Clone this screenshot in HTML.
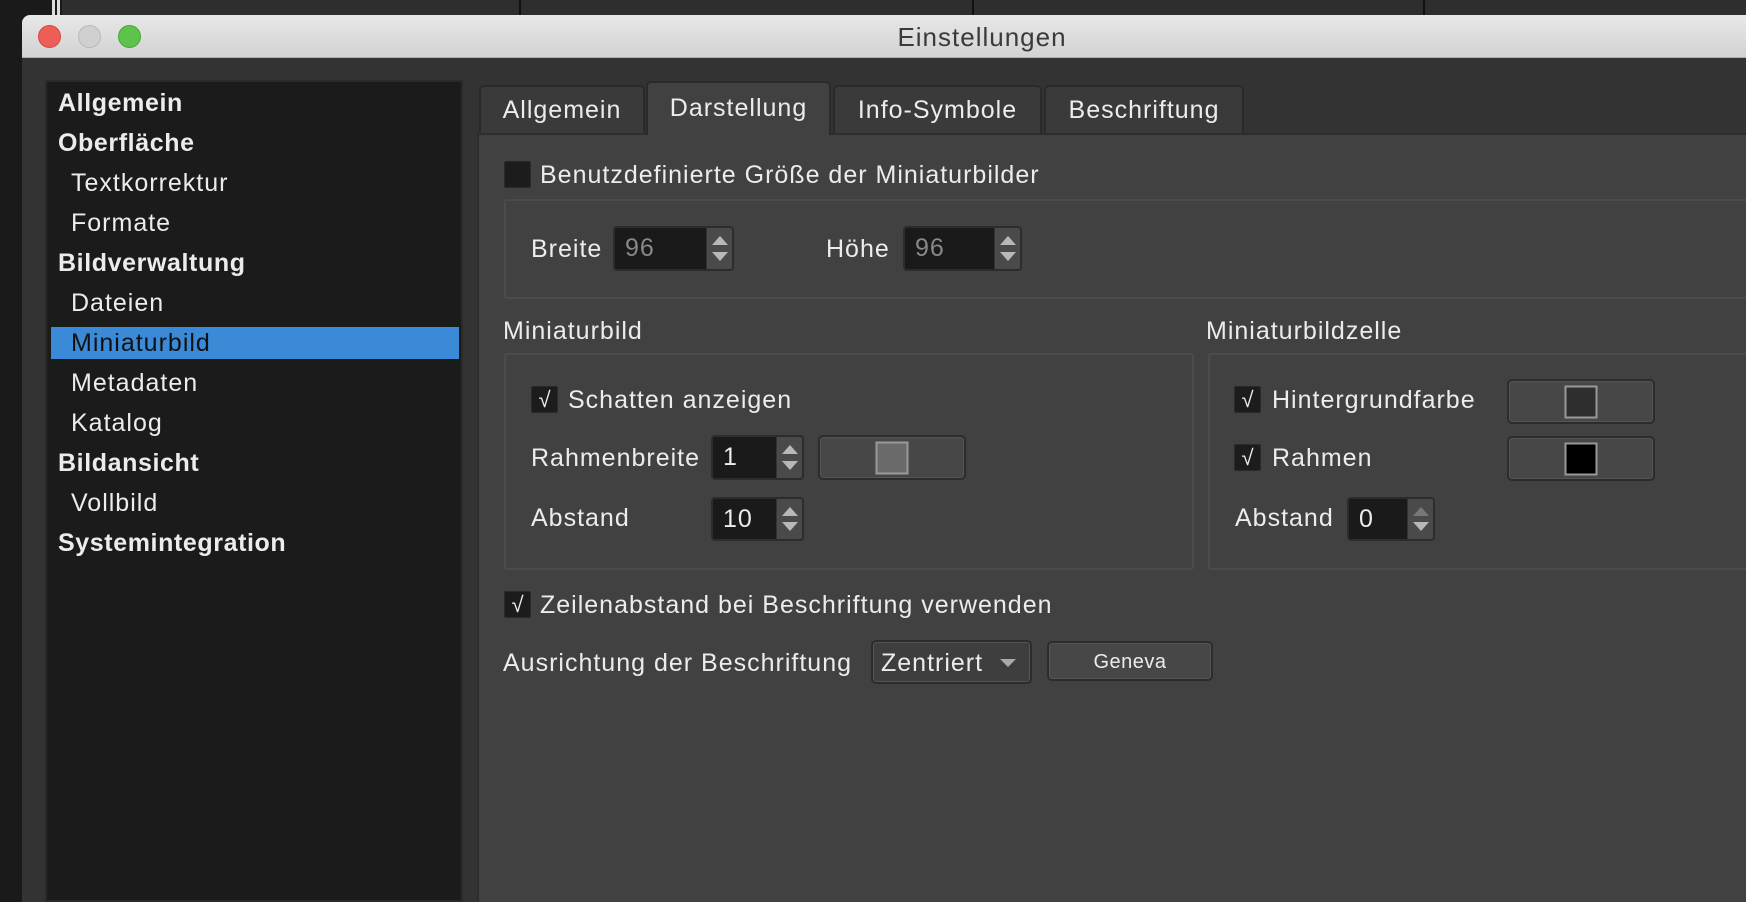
<!DOCTYPE html>
<html><head><meta charset="utf-8"><style>
*{box-sizing:border-box;margin:0;padding:0}
body{width:1746px;height:902px;overflow:hidden;background:#1a1a1a;font-family:"Liberation Sans",sans-serif;color:#ececec;position:relative}
.a{position:absolute}
.t{position:absolute;font-size:25px;letter-spacing:1px;white-space:nowrap;line-height:28px}
.cb{position:absolute;width:27px;height:27px;background:#1c1c1c;border:1px solid #2a2a2a;border-radius:2px;color:#eee;font-size:22px;line-height:26px;text-align:center}
.spin{position:absolute;background:#1a1a1a;border:2px solid #2c2c2c;border-radius:4px;overflow:hidden}
.spin .v{position:absolute;left:10px;top:0;font-size:25px;letter-spacing:1px;line-height:40px}
.spin .ar{position:absolute;right:0;top:0;bottom:0;width:26px;background:#4a4a4a;border-left:1px solid #333}
.up{position:absolute;left:5px;top:8px;width:0;height:0;border-left:8px solid transparent;border-right:8px solid transparent;border-bottom:9px solid #b8b8b8}
.dn{position:absolute;left:5px;bottom:8px;width:0;height:0;border-left:8px solid transparent;border-right:8px solid transparent;border-top:9px solid #b8b8b8}
.btn{position:absolute;background:#474747;border:2px solid #2c2c2c;border-radius:5px;box-shadow:inset 0 0 0 1px #555}
.sw{position:absolute;top:50%;left:50%;width:33px;height:33px;transform:translate(-50%,-50%);border:2px solid #999}
.grp{position:absolute;border:2px solid #4b4b4b;border-radius:3px}
.side div{position:absolute;left:11px;font-size:25px;letter-spacing:1px;line-height:40px;height:40px;white-space:nowrap}
.side .b{font-weight:bold;letter-spacing:0.6px}
.side .i{left:24px}
.tab{position:absolute;top:85px;height:48px;background:#3a3a3a;border:2px solid #2a2a2a;border-bottom:none;border-radius:5px 5px 0 0;font-size:25px;letter-spacing:1px;text-align:center;line-height:46px}
</style></head><body>
<div class="a" style="left:62px;top:0;width:1684px;height:16px;background:#2e2e2e"></div>
<div class="a" style="left:52px;top:0;width:3px;height:16px;background:#ddd"></div>
<div class="a" style="left:57px;top:0;width:3px;height:16px;background:#ddd"></div>
<div class="a" style="left:519px;top:0;width:2px;height:16px;background:#111"></div>
<div class="a" style="left:972px;top:0;width:2px;height:16px;background:#111"></div>
<div class="a" style="left:1423px;top:0;width:2px;height:16px;background:#111"></div>
<div class="a" style="left:22px;top:15px;width:1724px;height:887px;background:#333;border-radius:8px 0 0 0;overflow:hidden">
 <div class="a" style="left:0;top:0;width:100%;height:43px;background:linear-gradient(#e8e8e8,#d2d2d2);border-bottom:1px solid #b0b0b0"></div>
 <div class="a" style="left:16px;top:10px;width:23px;height:23px;border-radius:50%;background:#ec5f56;border:1px solid #d34a42"></div>
 <div class="a" style="left:56px;top:10px;width:23px;height:23px;border-radius:50%;background:#d0d0d0;border:1px solid #b8b8b8"></div>
 <div class="a" style="left:96px;top:10px;width:23px;height:23px;border-radius:50%;background:#5ec34a;border:1px solid #47a836"></div>
 <div class="t" style="left:0;width:1920px;text-align:center;top:8px;color:#3a3a3a;font-size:26px">Einstellungen</div>
</div>
<div class="a side" style="left:45px;top:80px;width:418px;height:822px;background:#1b1b1b;border:2px solid #2a2a2a">
 <div class="a" style="left:4px;top:245px;width:408px;height:32px;background:#3a8ad8"></div>
 <div class="b" style="top:1px">Allgemein</div>
 <div class="b" style="top:41px">Oberfläche</div>
 <div class="i" style="top:81px">Textkorrektur</div>
 <div class="i" style="top:121px">Formate</div>
 <div class="b" style="top:161px">Bildverwaltung</div>
 <div class="i" style="top:201px">Dateien</div>
 <div class="i" style="top:241px;color:#111">Miniaturbild</div>
 <div class="i" style="top:281px">Metadaten</div>
 <div class="i" style="top:321px">Katalog</div>
 <div class="b" style="top:361px">Bildansicht</div>
 <div class="i" style="top:401px">Vollbild</div>
 <div class="b" style="top:441px">Systemintegration</div>
</div>
<div class="a" style="left:477px;top:133px;width:1269px;height:769px;background:#414141;border:2px solid #2e2e2e;border-right:none;border-bottom:none"></div>
<div class="tab" style="left:479px;width:166px">Allgemein</div>
<div class="tab" style="left:646px;top:81px;height:54px;width:185px;background:#414141;line-height:50px">Darstellung</div>
<div class="tab" style="left:833px;width:209px">Info-Symbole</div>
<div class="tab" style="left:1044px;width:200px">Beschriftung</div>

<div class="cb" style="left:504px;top:161px"></div>
<div class="t" style="left:540px;top:161px">Benutzdefinierte Größe der Miniaturbilder</div>
<div class="grp" style="left:504px;top:199px;width:1250px;height:100px"></div>
<div class="t" style="left:531px;top:235px">Breite</div>
<div class="spin" style="left:613px;top:226px;width:121px;height:45px"><span class="v" style="color:#888">96</span><div class="ar"><i class="up"></i><i class="dn"></i></div></div>
<div class="t" style="left:826px;top:235px">Höhe</div>
<div class="spin" style="left:903px;top:226px;width:119px;height:45px"><span class="v" style="color:#888">96</span><div class="ar"><i class="up"></i><i class="dn"></i></div></div>

<div class="t" style="left:503px;top:317px">Miniaturbild</div>
<div class="t" style="left:1206px;top:317px">Miniaturbildzelle</div>
<div class="grp" style="left:504px;top:353px;width:690px;height:217px"></div>
<div class="grp" style="left:1208px;top:353px;width:550px;height:217px"></div>

<div class="cb" style="left:531px;top:386px">√</div>
<div class="t" style="left:568px;top:386px">Schatten anzeigen</div>
<div class="t" style="left:531px;top:444px">Rahmenbreite</div>
<div class="spin" style="left:711px;top:435px;width:93px;height:45px"><span class="v">1</span><div class="ar"><i class="up"></i><i class="dn"></i></div></div>
<div class="btn" style="left:818px;top:435px;width:148px;height:45px"><div class="sw" style="background:#6a6a6a"></div></div>
<div class="t" style="left:531px;top:504px">Abstand</div>
<div class="spin" style="left:711px;top:497px;width:93px;height:44px"><span class="v">10</span><div class="ar"><i class="up"></i><i class="dn"></i></div></div>

<div class="cb" style="left:1234px;top:386px">√</div>
<div class="t" style="left:1272px;top:386px">Hintergrundfarbe</div>
<div class="btn" style="left:1507px;top:379px;width:148px;height:45px"><div class="sw" style="background:#2e2e2e"></div></div>
<div class="cb" style="left:1234px;top:444px">√</div>
<div class="t" style="left:1272px;top:444px">Rahmen</div>
<div class="btn" style="left:1507px;top:436px;width:148px;height:45px"><div class="sw" style="background:#000"></div></div>
<div class="t" style="left:1235px;top:504px">Abstand</div>
<div class="spin" style="left:1347px;top:497px;width:88px;height:44px"><span class="v">0</span><div class="ar"><i class="up" style="border-bottom-color:#777"></i><i class="dn"></i></div></div>

<div class="cb" style="left:504px;top:591px">√</div>
<div class="t" style="left:540px;top:591px">Zeilenabstand bei Beschriftung verwenden</div>
<div class="t" style="left:503px;top:649px">Ausrichtung der Beschriftung</div>
<div class="btn" style="left:871px;top:640px;width:161px;height:44px;background:#3e3e3e"><span class="t" style="left:8px;top:7px">Zentriert</span><i class="a" style="right:14px;top:17px;border-left:8px solid transparent;border-right:8px solid transparent;border-top:8px solid #aaa"></i></div>
<div class="btn" style="left:1047px;top:641px;width:166px;height:40px"><span class="t" style="left:0;width:162px;text-align:center;top:5px;font-size:20px;letter-spacing:0.5px">Geneva</span></div>
</body></html>
